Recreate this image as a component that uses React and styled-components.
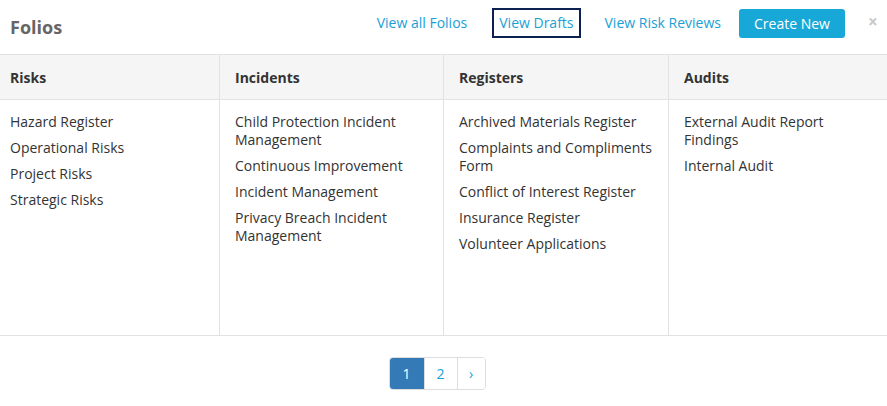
import React from "react";
import styled, { createGlobalStyle } from "styled-components";

const Global = createGlobalStyle`
  html, body { margin: 0; padding: 0; background: #fff; }
  body { font-family: "Open Sans", "Liberation Sans", sans-serif; font-size: 14px; color: #333; }
  * { box-sizing: border-box; }
`;

const Panel = styled.div`
  width: 887px;
  height: 406px;
  background: #fff;
  display: flex;
  flex-direction: column;
`;

const Header = styled.div`
  height: 55px;
  display: flex;
  align-items: center;
  padding: 0 7px 3px 10px;
  border-bottom: 1px solid #e2e2e2;
`;

const Title = styled.h2`
  margin: 0;
  font-size: 18px;
  font-weight: 700;
  color: #666;
  flex: 1;
  position: relative;
  top: 1px;
`;

const Nav = styled.div`
  display: flex;
  align-items: center;
  margin-top: -6px;
`;

const NavLink = styled.a`
  display: inline-block;
  padding: 3px 5px 4px;
  margin-left: ${p => p.$gap}px;
  border: 2px solid ${p => (p.$focused ? "#0d2150" : "transparent")};
  color: #1a9fd6;
  font-size: 14px;
  line-height: 19px;
  text-decoration: none;
  cursor: pointer;
`;

const CreateButton = styled.button`
  margin-left: 11px;
  height: 29px;
  width: 106px;
  border: none;
  border-radius: 3px;
  background: #17a8d8;
  color: #fff;
  font-family: inherit;
  font-size: 14px;
  padding: 0;
  margin-top: -4px;
  cursor: pointer;
`;

const Close = styled.span`
  margin-left: 23px;
  width: 12px;
  color: #c9c9c9;
  font-size: 17px;
  font-weight: 700;
  line-height: 1;
  margin-top: -9px;
`;

const Grid = styled.div`
  display: grid;
  grid-template-columns: 219px 224px 225px 1fr;
  border-bottom: 1px solid #e2e2e2;
`;

const HeadCell = styled.div`
  height: 45px;
  background: #f5f5f5;
  border-bottom: 1px solid #e2e2e2;
  border-left: ${p => (p.$first ? "none" : "1px solid #e2e2e2")};
  padding: 0 10px 0 ${p => (p.$first ? 10 : 15)}px;
  display: flex;
  align-items: center;
  font-weight: 700;
  font-size: 14px;
  color: #333;
`;

const BodyCell = styled.ul`
  list-style: none;
  margin: 0;
  height: 235px;
  padding: 13px 8px 0 ${p => (p.$first ? 10 : 15)}px;
  border-left: ${p => (p.$first ? "none" : "1px solid #e2e2e2")};
  display: flex;
  flex-direction: column;
  gap: 8px;
`;

const Item = styled.li`
  font-size: 14px;
  line-height: 18px;
  color: #333;
`;

const Footer = styled.div`
  display: flex;
  justify-content: center;
  padding: 21px 13px 0 0;
`;

const Pager = styled.div`
  display: flex;
  border: 1px solid #ddd;
  border-radius: 4px;
  overflow: hidden;
  height: 33px;
`;

const PageItem = styled.span`
  width: ${p => p.$w}px;
  display: flex;
  align-items: center;
  justify-content: center;
  font-size: 14px;
  color: ${p => (p.$active ? "#fff" : "#1a9fd6")};
  background: ${p => (p.$active ? "#337ab7" : "#fff")};
  border-left: ${p => (p.$first ? "none" : "1px solid #ddd")};
`;

const columns = [
  { title: "Risks", items: ["Hazard Register", "Operational Risks", "Project Risks", "Strategic Risks"] },
  {
    title: "Incidents",
    items: [
      "Child Protection Incident Management",
      "Continuous Improvement",
      "Incident Management",
      "Privacy Breach Incident Management",
    ],
  },
  {
    title: "Registers",
    items: [
      "Archived Materials Register",
      "Complaints and Compliments Form",
      "Conflict of Interest Register",
      "Insurance Register",
      "Volunteer Applications",
    ],
  },
  { title: "Audits", items: ["External Audit Report Findings", "Internal Audit"] },
];

export default function App() {
  return (
    <>
      <Global />
      <Panel>
        <Header>
          <Title>Folios</Title>
          <Nav>
            <NavLink $gap={0}>View all Folios</NavLink>
            <NavLink $gap={18} $focused>View Drafts</NavLink>
            <NavLink $gap={17}>View Risk Reviews</NavLink>
          </Nav>
          <CreateButton>Create New</CreateButton>
          <Close>×</Close>
        </Header>
        <Grid>
          {columns.map((c, i) => (
            <HeadCell key={c.title} $first={i === 0}>{c.title}</HeadCell>
          ))}
          {columns.map((c, i) => (
            <BodyCell key={c.title} $first={i === 0}>
              {c.items.map(it => (
                <Item key={it}>{it}</Item>
              ))}
            </BodyCell>
          ))}
        </Grid>
        <Footer>
          <Pager>
            <PageItem $w={34} $first $active>1</PageItem>
            <PageItem $w={33}>2</PageItem>
            <PageItem $w={28}>›</PageItem>
          </Pager>
        </Footer>
      </Panel>
    </>
  );
}
